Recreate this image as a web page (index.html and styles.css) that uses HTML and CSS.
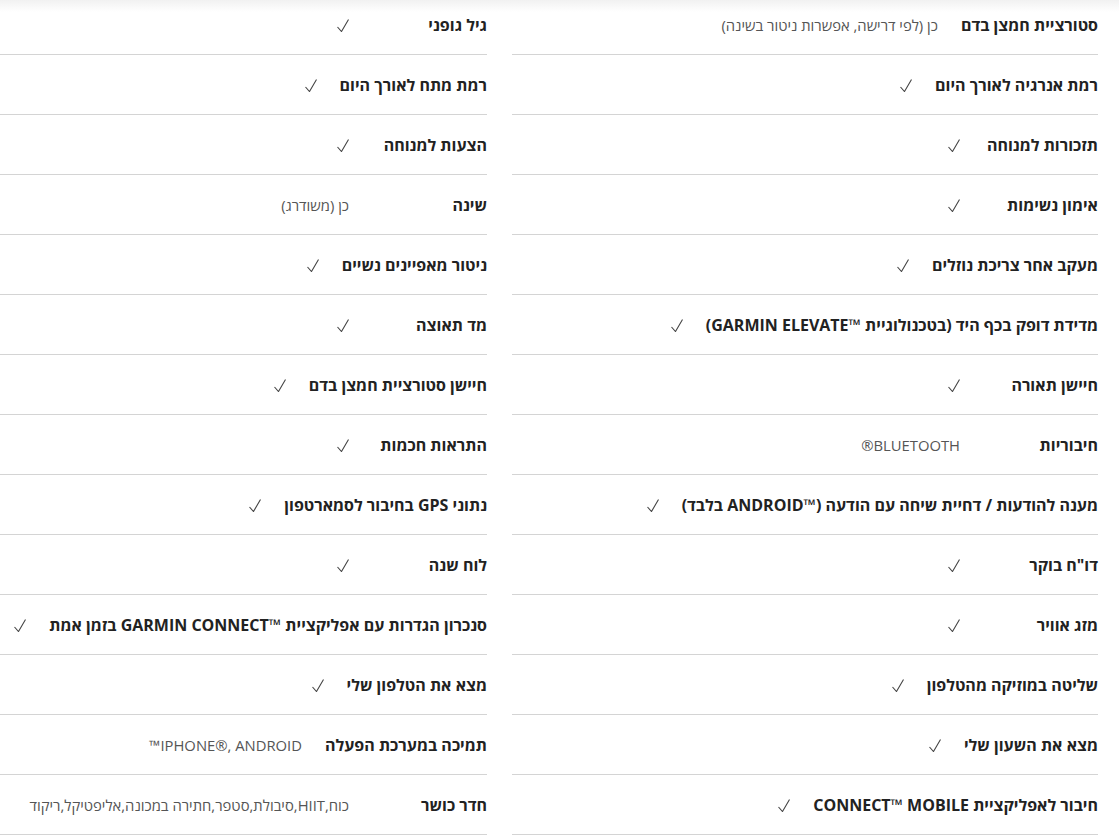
FILE: index.html
```html
<!DOCTYPE html>
<html lang="he" dir="rtl">
<head>
<meta charset="utf-8">
<title>מפרט</title>
<link rel="stylesheet" href="styles.css">
</head>
<body>
<div class="specs">
  <ul class="col">
    <li class="row"><span class="label">סטורציית חמצן בדם</span><span class="value">כן (לפי דרישה, אפשרות ניטור בשינה)</span></li>
    <li class="row"><span class="label">רמת אנרגיה לאורך היום</span><span class="value"><svg class="check" viewBox="0 0 12 13"><polyline points="0.5,8 4.5,12.5 11.5,0.5"/></svg></span></li>
    <li class="row"><span class="label">תזכורות למנוחה</span><span class="value"><svg class="check" viewBox="0 0 12 13"><polyline points="0.5,8 4.5,12.5 11.5,0.5"/></svg></span></li>
    <li class="row"><span class="label">אימון נשימות</span><span class="value"><svg class="check" viewBox="0 0 12 13"><polyline points="0.5,8 4.5,12.5 11.5,0.5"/></svg></span></li>
    <li class="row"><span class="label">מעקב אחר צריכת נוזלים</span><span class="value"><svg class="check" viewBox="0 0 12 13"><polyline points="0.5,8 4.5,12.5 11.5,0.5"/></svg></span></li>
    <li class="row"><span class="label">מדידת דופק בכף היד (בטכנולוגיית ™GARMIN ELEVATE)</span><span class="value"><svg class="check" viewBox="0 0 12 13"><polyline points="0.5,8 4.5,12.5 11.5,0.5"/></svg></span></li>
    <li class="row"><span class="label">חיישן תאורה</span><span class="value"><svg class="check" viewBox="0 0 12 13"><polyline points="0.5,8 4.5,12.5 11.5,0.5"/></svg></span></li>
    <li class="row"><span class="label">חיבוריות</span><span class="value">BLUETOOTH®</span></li>
    <li class="row"><span class="label">מענה להודעות / דחיית שיחה עם הודעה (™ANDROID בלבד)</span><span class="value"><svg class="check" viewBox="0 0 12 13"><polyline points="0.5,8 4.5,12.5 11.5,0.5"/></svg></span></li>
    <li class="row"><span class="label">דו"ח בוקר</span><span class="value"><svg class="check" viewBox="0 0 12 13"><polyline points="0.5,8 4.5,12.5 11.5,0.5"/></svg></span></li>
    <li class="row"><span class="label">מזג אוויר</span><span class="value"><svg class="check" viewBox="0 0 12 13"><polyline points="0.5,8 4.5,12.5 11.5,0.5"/></svg></span></li>
    <li class="row"><span class="label">שליטה במוזיקה מהטלפון</span><span class="value"><svg class="check" viewBox="0 0 12 13"><polyline points="0.5,8 4.5,12.5 11.5,0.5"/></svg></span></li>
    <li class="row"><span class="label">מצא את השעון שלי</span><span class="value"><svg class="check" viewBox="0 0 12 13"><polyline points="0.5,8 4.5,12.5 11.5,0.5"/></svg></span></li>
    <li class="row"><span class="label">חיבור לאפליקציית CONNECT™ MOBILE</span><span class="value"><svg class="check" viewBox="0 0 12 13"><polyline points="0.5,8 4.5,12.5 11.5,0.5"/></svg></span></li>
  </ul>
  <ul class="col">
    <li class="row"><span class="label">גיל גופני</span><span class="value"><svg class="check" viewBox="0 0 12 13"><polyline points="0.5,8 4.5,12.5 11.5,0.5"/></svg></span></li>
    <li class="row"><span class="label">רמת מתח לאורך היום</span><span class="value"><svg class="check" viewBox="0 0 12 13"><polyline points="0.5,8 4.5,12.5 11.5,0.5"/></svg></span></li>
    <li class="row"><span class="label">הצעות למנוחה</span><span class="value"><svg class="check" viewBox="0 0 12 13"><polyline points="0.5,8 4.5,12.5 11.5,0.5"/></svg></span></li>
    <li class="row"><span class="label">שינה</span><span class="value">כן (משודרג)</span></li>
    <li class="row"><span class="label">ניטור מאפיינים נשיים</span><span class="value"><svg class="check" viewBox="0 0 12 13"><polyline points="0.5,8 4.5,12.5 11.5,0.5"/></svg></span></li>
    <li class="row"><span class="label">מד תאוצה</span><span class="value"><svg class="check" viewBox="0 0 12 13"><polyline points="0.5,8 4.5,12.5 11.5,0.5"/></svg></span></li>
    <li class="row"><span class="label">חיישן סטורציית חמצן בדם</span><span class="value"><svg class="check" viewBox="0 0 12 13"><polyline points="0.5,8 4.5,12.5 11.5,0.5"/></svg></span></li>
    <li class="row"><span class="label">התראות חכמות</span><span class="value"><svg class="check" viewBox="0 0 12 13"><polyline points="0.5,8 4.5,12.5 11.5,0.5"/></svg></span></li>
    <li class="row"><span class="label">נתוני GPS בחיבור לסמארטפון</span><span class="value"><svg class="check" viewBox="0 0 12 13"><polyline points="0.5,8 4.5,12.5 11.5,0.5"/></svg></span></li>
    <li class="row"><span class="label">לוח שנה</span><span class="value"><svg class="check" viewBox="0 0 12 13"><polyline points="0.5,8 4.5,12.5 11.5,0.5"/></svg></span></li>
    <li class="row"><span class="label">סנכרון הגדרות עם אפליקציית ™GARMIN CONNECT בזמן אמת</span><span class="value"><svg class="check" viewBox="0 0 12 13"><polyline points="0.5,8 4.5,12.5 11.5,0.5"/></svg></span></li>
    <li class="row"><span class="label">מצא את הטלפון שלי</span><span class="value"><svg class="check" viewBox="0 0 12 13"><polyline points="0.5,8 4.5,12.5 11.5,0.5"/></svg></span></li>
    <li class="row"><span class="label">תמיכה במערכת הפעלה</span><span class="value">IPHONE®, ANDROID™</span></li>
    <li class="row"><span class="label">חדר כושר</span><span class="value">כוח,HIIT,סיבולת,סטפר,חתירה במכונה,אליפטיקל,ריקוד</span></li>
  </ul>
</div>
</body>
</html>
```

FILE: styles.css
```css
html, body {
  margin: 0;
  padding: 0;
}
body {
  background: linear-gradient(#f1f1f1 0, #ffffff 12px) no-repeat #ffffff;
  font-family: "Open Sans", "Noto Sans", "DejaVu Sans", sans-serif;
  color: #222222;
  overflow: hidden;
}
.specs {
  direction: rtl;
  display: grid;
  grid-template-columns: 586px 487px;
  column-gap: 25px;
  padding-right: 21px;
  margin-top: -5px;
}
.col {
  list-style: none;
  margin: 0;
  padding: 0;
}
.row {
  display: flex;
  align-items: center;
  gap: 23px;
  height: 59px;
  border-bottom: 1px solid #d4d4d4;
}
.label {
  min-width: 115px;
  font-size: 16px;
  font-weight: 700;
  color: #222222;
  white-space: nowrap;
}
.value {
  display: flex;
  align-items: center;
  font-size: 14.8px;
  color: #555555;
  white-space: nowrap;
}
.check {
  width: 12px;
  height: 13px;
  margin-top: 2px;
  fill: none;
  stroke: #444444;
  stroke-width: 1.1;
}
```
